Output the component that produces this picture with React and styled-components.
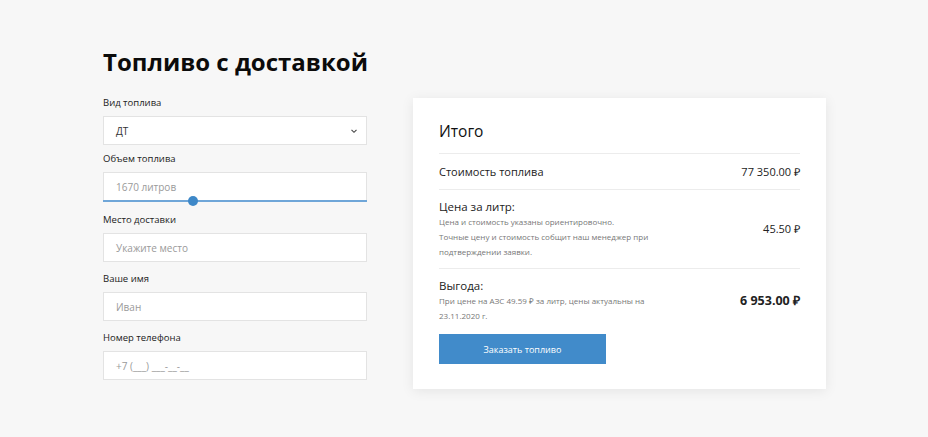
import React from "react";
import styled, { createGlobalStyle } from "styled-components";

const GlobalStyle = createGlobalStyle`
  html, body {
    margin: 0;
    padding: 0;
    background: #f7f7f7;
    font-family: "Open Sans", "Liberation Sans", sans-serif;
    color: #111;
  }
  * { box-sizing: border-box; }
`;

const Page = styled.div`
  width: 928px;
  height: 437px;
  display: flex;
  align-items: flex-start;
  gap: 46px;
  padding: 44px 0 0 103px;
`;

const FormColumn = styled.div`
  width: 264px;
  display: flex;
  flex-direction: column;
`;

const Title = styled.h1`
  margin: 0 0 16px;
  font-size: 24px;
  font-weight: 700;
  line-height: 36px;
  white-space: nowrap;
  color: #0b0b0b;
`;

const Field = styled.div`
  display: flex;
  flex-direction: column;
  margin-bottom: ${(p) => p.$gap || "10px"};
`;

const Label = styled.label`
  font-size: 9.5px;
  line-height: 13px;
  margin-bottom: 7px;
  color: #222;
`;

const Box = styled.div`
  position: relative;
  height: 29px;
  background: #fff;
  border: 1px solid #e3e3e3;
  display: flex;
  align-items: center;
  justify-content: space-between;
  padding: 0 8px 0 12px;
  font-size: 10px;
  color: ${(p) => (p.$filled ? "#333" : "#9a9a9a")};
`;

const Chevron = styled.svg`
  width: 8px;
  height: 8px;
`;

const SliderTrack = styled.div`
  position: absolute;
  left: -1px;
  right: -1px;
  bottom: -2px;
  height: 2px;
  background: #6fa6d8;
`;

const SliderThumb = styled.div`
  position: absolute;
  top: -4px;
  width: 10px;
  height: 10px;
  border-radius: 50%;
  background: #3e88c8;
  transform: translateX(-50%);
`;

const Card = styled.div`
  margin-top: 54px;
  width: 413px;
  background: #fff;
  box-shadow: 0 2px 12px rgba(0, 0, 0, 0.08);
  padding: 22px 26px 25px;
`;

const CardTitle = styled.div`
  font-size: 15.5px;
  line-height: 22px;
  padding-bottom: 11px;
  border-bottom: 1px solid #ececec;
  color: #111;
`;

const Row = styled.div`
  display: flex;
  justify-content: space-between;
  align-items: ${(p) => (p.$top ? "flex-start" : "center")};
  padding: ${(p) => p.$pad || "10px 0"};
  border-bottom: ${(p) => (p.$last ? "none" : "1px solid #ececec")};
`;

const RowMain = styled.div`
  font-size: 11px;
  color: #222;
`;

const RowHead = styled.div`
  font-size: 11.5px;
  line-height: 15px;
  color: #222;
`;

const Note = styled.div`
  width: 240px;
  font-size: 8px;
  line-height: 15px;
  color: #777;
`;

const Value = styled.div`
  font-size: ${(p) => (p.$bold ? "12.5px" : "11px")};
  font-weight: ${(p) => (p.$bold ? 700 : 400)};
  color: #222;
  white-space: nowrap;
  margin-top: ${(p) => p.$offset || "0"};
`;

const Button = styled.button`
  margin-top: 11px;
  width: 167px;
  height: 30px;
  border: none;
  background: #418bca;
  color: #fff;
  font-family: inherit;
  font-size: 9px;
  cursor: pointer;
`;

const fields = [
  { label: "Место доставки", text: "Укажите место" },
  { label: "Ваше имя", text: "Иван" },
  { label: "Номер телефона", text: "+7 (___) ___-__-__" },
];

export default function App() {
  const volume = 0.34;
  return (
    <>
      <GlobalStyle />
      <Page>
        <FormColumn>
          <Title>Топливо с доставкой</Title>
          <Field $gap="7px">
            <Label>Вид топлива</Label>
            <Box $filled>
              ДТ
              <Chevron viewBox="0 0 8 8">
                <path d="M1.5 2.8 L4 5.3 L6.5 2.8" fill="none" stroke="#444" strokeWidth="1.1" />
              </Chevron>
            </Box>
          </Field>
          <Field $gap="12px">
            <Label>Объем топлива</Label>
            <Box>
              1670 литров
              <SliderTrack>
                <SliderThumb style={{ left: `${volume * 100}%` }} />
              </SliderTrack>
            </Box>
          </Field>
          {fields.map((f) => (
            <Field key={f.label}>
              <Label>{f.label}</Label>
              <Box>{f.text}</Box>
            </Field>
          ))}
        </FormColumn>
        <Card>
          <CardTitle>Итого</CardTitle>
          <Row $pad="10px 0 10px">
            <RowMain>Стоимость топлива</RowMain>
            <Value>77 350.00 ₽</Value>
          </Row>
          <Row $top $pad="9px 0 9px">
            <div>
              <RowHead>Цена за литр:</RowHead>
              <Note>
                Цена и стоимость указаны ориентировочно.
                <br />
                Точные цену и стоимость собщит наш менеджер при подтверждении заявки.
              </Note>
            </div>
            <Value $offset="22px">45.50 ₽</Value>
          </Row>
          <Row $top $last $pad="9px 0 0">
            <div>
              <RowHead>Выгода:</RowHead>
              <Note>При цене на АЗС 49.59 ₽ за литр, цены актуальны на 23.11.2020 г.</Note>
            </div>
            <Value $bold $offset="14px">6 953.00 ₽</Value>
          </Row>
          <Button>Заказать топливо</Button>
        </Card>
      </Page>
    </>
  );
}
